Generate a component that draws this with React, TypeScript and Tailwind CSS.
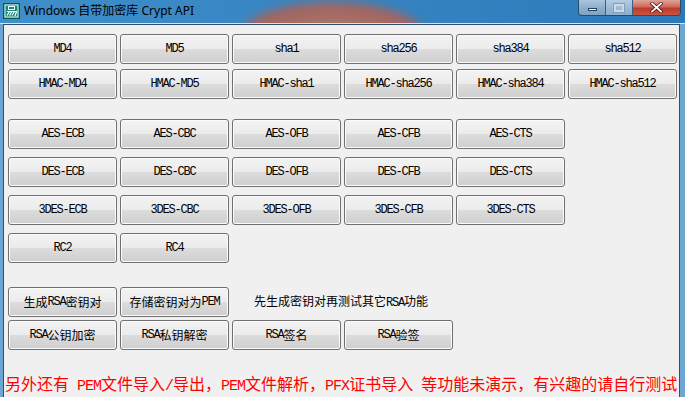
import React from "react"

const btn =
  "h-[30px] w-[109px] shrink-0 rounded-[3px] border border-[#707070] bg-[linear-gradient(to_bottom,#f3f3f3_0%,#ebebeb_50%,#dcdcdc_50%,#cfcfcf_100%)] shadow-[inset_0_0_0_1px_#fbfbfb] text-[12px] leading-none text-black flex items-center justify-center"

// SimSun-ish: ascii runs are half width
function Mixed({ s, big }: { s: string; big?: boolean }) {
  const parts = s.split(/([\x20-\x7e]+)/).filter(p => p !== "")
  return (
    <>
      {parts.map((p, i) =>
        /^[\x20-\x7e]+$/.test(p) ? (
          <span
            key={i}
            className={
              big
                ? "[font-family:'Liberation_Mono',monospace] text-[15px] tracking-[-1px] whitespace-pre"
                : "[font-family:'Liberation_Mono',monospace] text-[12px] tracking-[-1.2px] whitespace-pre"
            }
          >
            {p}
          </span>
        ) : (
          <span key={i}>{p}</span>
        )
      )}
    </>
  )
}

function Btn({ label }: { label: string }) {
  return (
    <button type="button" className={btn}>
      <Mixed s={label} />
    </button>
  )
}

function Row({ mt, items }: { mt: string; items: string[] }) {
  return (
    <div className={"flex gap-[3px] " + mt}>
      {items.map(t => (
        <Btn key={t} label={t} />
      ))}
    </div>
  )
}

function AppIcon() {
  return (
    <svg width="17" height="16" viewBox="0 0 17 16">
      <rect x="0.5" y="0.5" width="16" height="15" fill="#16897a" stroke="#0a5a50" />
      <rect x="2" y="2" width="13" height="12" fill="none" stroke="#e8f6f3" strokeWidth="1" />
      <rect x="5.5" y="3.5" width="6" height="3" fill="none" stroke="#ffffff" />
      <path d="M4 8.5h9.5l-1.5 4.5M6.5 8.5l-2.5 4M9 8.5l-2.5 4M11.5 8.5l-2.5 4" fill="none" stroke="#ffffff" strokeWidth="1.2" />
    </svg>
  )
}

function Controls() {
  return (
    <div className="mr-[4px] flex h-[16px] overflow-hidden rounded-b-[4px] border border-t-0 border-[#2d4a66]">
      <div className="flex w-[27px] items-center justify-center border-r border-[#3d5f80] bg-[linear-gradient(to_bottom,#aac6de_0%,#8eb0cf_50%,#7ea3c6_100%)]">
        <div className="mt-[4px] h-[3px] w-[9px] border border-[#2c3e50] bg-white" />
      </div>
      <div className="flex w-[27px] items-center justify-center border-r border-[#3d5f80] bg-[linear-gradient(to_bottom,#b4cde3_0%,#9dbad6_50%,#8daecd_100%)]">
        <div className="h-[8px] w-[10px] border-2 border-[#c9dbea] shadow-[0_0_0_1px_#7f9fbd]" />
      </div>
      <div className="flex w-[47px] items-center justify-center bg-[linear-gradient(to_bottom,#e0a49a_0%,#cf6a5c_45%,#c0392b_55%,#c8553f_100%)]">
        <svg width="13" height="11" viewBox="0 0 13 11">
          <path d="M2 1.5l9 8M11 1.5l-9 8" stroke="#4a1410" strokeWidth="3.4" strokeLinecap="square" />
          <path d="M2 1.5l9 8M11 1.5l-9 8" stroke="#ffffff" strokeWidth="1.8" strokeLinecap="square" />
        </svg>
      </div>
    </div>
  )
}

export default function App() {
  return (
    <div className="relative flex h-[397px] w-[685px] flex-col overflow-hidden bg-[#6ea6d2] font-['Noto_Sans_CJK_SC',sans-serif]">
      {/* title bar */}
      <div className="relative flex h-[24px] shrink-0 items-start justify-between overflow-hidden border-b border-[#d3e3ef] bg-linear-to-r from-[#3f8fca] to-[#2d7aba]">
        <div className="absolute left-[240px] top-[2px] h-[70px] w-[185px] rounded-[50%] bg-[radial-gradient(ellipse_at_center,#a88a7a_0%,#a56a62_45%,#a05a56_100%)] blur-[5px]" />
        <div className="relative flex items-center">
          <div className="ml-[3px] mt-[3px]">
            <AppIcon />
          </div>
          <span className="ml-[4px] mt-[2px] font-['Noto_Sans','Noto_Sans_CJK_SC',sans-serif] text-[12px] leading-[16px] text-black">
            Windows 自带加密库 Crypt API
          </span>
        </div>
        <div className="relative">
          <Controls />
        </div>
      </div>

      {/* client area */}
      <div className="ml-[3px] mr-[5px] flex flex-1 flex-col border-l border-r border-t border-[#34506b] bg-[#f0f0f0] pl-[4px]">
        <Row mt="mt-[9px]" items={["MD4", "MD5", "sha1", "sha256", "sha384", "sha512"]} />
        <Row mt="mt-[5px]" items={["HMAC-MD4", "HMAC-MD5", "HMAC-sha1", "HMAC-sha256", "HMAC-sha384", "HMAC-sha512"]} />
        <Row mt="mt-[20px]" items={["AES-ECB", "AES-CBC", "AES-OFB", "AES-CFB", "AES-CTS"]} />
        <Row mt="mt-[8px]" items={["DES-ECB", "DES-CBC", "DES-OFB", "DES-CFB", "DES-CTS"]} />
        <Row mt="mt-[8px]" items={["3DES-ECB", "3DES-CBC", "3DES-OFB", "3DES-CFB", "3DES-CTS"]} />
        <Row mt="mt-[8px]" items={["RC2", "RC4"]} />
        <div className="mt-[24px] flex items-center gap-[3px]">
          <Btn label="生成RSA密钥对" />
          <Btn label="存储密钥对为PEM" />
          <span className="ml-[22px] text-[12px] leading-none text-black">
            <Mixed s="先生成密钥对再测试其它RSA功能" />
          </span>
        </div>
        <Row mt="mt-[3px]" items={["RSA公钥加密", "RSA私钥解密", "RSA签名", "RSA验签"]} />
        <div className="-ml-[3px] mt-[25px] whitespace-nowrap text-[16px] leading-[16px] text-[#ff0000]">
          <Mixed big s="另外还有 PEM文件导入/导出，PEM文件解析，PFX证书导入 等功能未演示，有兴趣的请自行测试" />
        </div>
      </div>
    </div>
  )
}
